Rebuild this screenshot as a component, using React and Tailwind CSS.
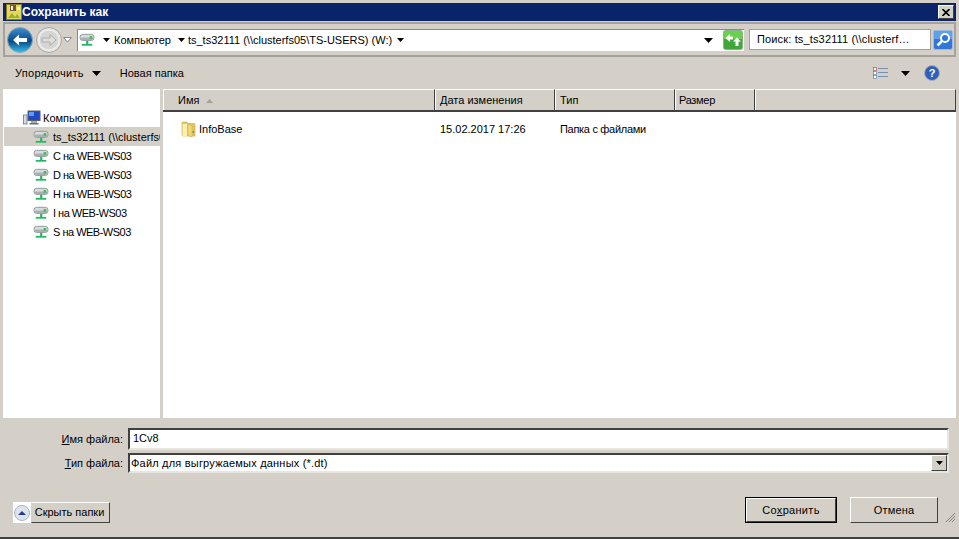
const font = { fontFamily: '"Liberation Sans", sans-serif' };

function NetDrive() {
  return (
    <svg width="16" height="14" viewBox="0 0 18 16" className="shrink-0">
      <rect x="1" y="1.5" width="16" height="7" rx="3" fill="#d8dcdc" stroke="#8a9296" />
      <rect x="2" y="5" width="14" height="3" rx="1.5" fill="#a9b1b4" />
      <rect x="12" y="3.5" width="3" height="3" fill="#3fbf4f" />
      <rect x="8" y="9" width="2.5" height="4" fill="#2fb35a" />
      <rect x="3" y="12.5" width="12" height="2" fill="#22b866" />
    </svg>
  );
}

function Computer() {
  return (
    <svg width="18" height="16" viewBox="0 0 18 16" className="shrink-0">
      <rect x="0.5" y="5" width="3.5" height="9" fill="#d5dde0" stroke="#5d7a86" strokeWidth="0.8" />
      <rect x="5" y="1" width="12" height="9.5" fill="#1f47c8" stroke="#59606a" />
      <rect x="6" y="2" width="5" height="4" fill="#5f9cf0" />
      <rect x="8" y="11" width="6" height="2" fill="#a2a8ac" />
      <rect x="6.5" y="13" width="9" height="1.5" fill="#6a7076" />
    </svg>
  );
}

function Folder() {
  return (
    <svg width="16" height="17" viewBox="0 0 16 17" className="shrink-0">
      <path d="M1 2 Q1 1 2 1 H6 L7 2.5 H13 Q14 2.5 14 3.5 V15 H2 Q1 15 1 14 Z" fill="#e8c65f" stroke="#c9a64a" strokeWidth="0.6" />
      <path d="M1.5 3 H6 V15.5 H2 Q1.5 15.5 1.5 15 Z" fill="#fbeeb0" />
      <path d="M7 3 L11 4.5 V16 L7 14.5 Z" fill="#f3d877" stroke="#c9a64a" strokeWidth="0.5" />
      <rect x="11.5" y="10" width="1.5" height="2" fill="#3f9ec9" />
    </svg>
  );
}

function Caret({ className = "" }) {
  return (
    <svg width="9" height="5" viewBox="0 0 9 5" className={"shrink-0 " + className}>
      <path d="M0 0 H9 L4.5 5 Z" fill="#000" />
    </svg>
  );
}

function SmallCaret() {
  return (
    <svg width="7" height="4" viewBox="0 0 7 4" className="shrink-0">
      <path d="M0 0 H7 L3.5 4 Z" fill="#000" />
    </svg>
  );
}

function TitleIcon() {
  return (
    <svg width="16" height="16" viewBox="0 0 16 16" className="shrink-0">
      <rect x="0.5" y="0.5" width="15" height="15" fill="#e9d55a" stroke="#8a7a20" />
      <rect x="4" y="1" width="6" height="6" fill="#6b5a3a" />
      <rect x="5" y="2" width="2" height="4" fill="#f4f0e0" />
      <path d="M2 14 L6 9 L9 13 L11 10 L14 14 Z" fill="#8fb72e" />
      <rect x="11" y="3" width="3" height="3" fill="#fff6b0" />
    </svg>
  );
}

function BackButton() {
  return (
    <svg width="26" height="26" viewBox="0 0 26 26" className="shrink-0">
      <defs>
        <linearGradient id="backFill" x1="0" y1="0" x2="0" y2="1">
          <stop offset="0" stopColor="#3f8fd0" />
          <stop offset="0.5" stopColor="#0f4f8f" />
          <stop offset="0.55" stopColor="#0a4a86" />
          <stop offset="1" stopColor="#36c0ee" />
        </linearGradient>
      </defs>
      <circle cx="13" cy="13" r="12.5" fill="url(#backFill)" stroke="#8fa6b8" />
      <path d="M6 13 L12 7.5 V11 H20 V15 H12 V18.5 Z" fill="#fff" />
    </svg>
  );
}

function ForwardButton() {
  return (
    <svg width="26" height="26" viewBox="0 0 26 26" className="shrink-0">
      <circle cx="13" cy="13" r="12.5" fill="#e4e4e2" stroke="#a8a8a6" />
      <circle cx="13" cy="13" r="10" fill="#d6d6d4" stroke="#f2f2f0" />
      <path d="M20 13 L14 7.5 V11 H6 V15 H14 V18.5 Z" fill="#dededc" stroke="#a2a2a0" strokeWidth="0.8" />
    </svg>
  );
}

function Refresh() {
  return (
    <svg width="20" height="20" viewBox="0 0 20 20" className="shrink-0">
      <rect x="0.5" y="0.5" width="19" height="19" rx="2" fill="#3fa63a" stroke="#86b884" />
      <rect x="1" y="1" width="18" height="8" fill="#6bd04f" />
      <path d="M2.5 8 L7 4 V6.5 H10 V9.5 H7 V12 Z" fill="#fff" />
      <path d="M14 7.5 L18 11.5 H15.5 V16 H12.5 V11.5 H10 Z" fill="#fff" />
    </svg>
  );
}

function SearchIcon() {
  return (
    <svg width="20" height="20" viewBox="0 0 20 20" className="shrink-0">
      <rect x="0.5" y="0.5" width="19" height="19" rx="2" fill="#2f78d8" stroke="#9dbbe0" />
      <rect x="1" y="1" width="18" height="8" fill="#5fa0ea" />
      <circle cx="12" cy="8" r="4" fill="#2f78d8" stroke="#fff" strokeWidth="2" />
      <path d="M9 11 L4.5 15.5" stroke="#fff" strokeWidth="2.5" />
    </svg>
  );
}

function ViewsIcon() {
  return (
    <svg width="16" height="12" viewBox="0 0 16 12" className="shrink-0">
      <rect x="0.5" y="0.5" width="3" height="3" fill="#fff" stroke="#c0504d" strokeWidth="0.7" />
      <rect x="0.5" y="4.5" width="3" height="3" fill="#fff" stroke="#6080b0" strokeWidth="0.7" />
      <rect x="0.5" y="8.5" width="3" height="3" fill="#fff" stroke="#6080b0" strokeWidth="0.7" />
      <path d="M5 1.5 H15 M5 5.5 H15 M5 9.5 H15" stroke="#7890b0" />
    </svg>
  );
}

function HelpIcon() {
  return (
    <svg width="16" height="16" viewBox="0 0 16 16" className="shrink-0">
      <circle cx="8" cy="8" r="7.5" fill="#2f5fb8" stroke="#a9aeb8" />
      <text x="8" y="12" textAnchor="middle" fontSize="11" fontWeight="700" fill="#fff" fontFamily="Liberation Sans">?</text>
    </svg>
  );
}

function HeaderCell({ w, className = "", children }) {
  return (
    <div className={"flex h-full shrink-0 items-center gap-[7px] border-t border-l border-r border-t-white border-l-white border-r-[#404040] pt-px " + w + " " + className}>
      {children}
    </div>
  );
}

const drives = ["C на WEB-WS03", "D на WEB-WS03", "H на WEB-WS03", "I на WEB-WS03", "S на WEB-WS03"];

export default function App() {
  return (
    <div style={font} className="flex h-[539px] w-[959px] flex-col overflow-hidden border-b-2 border-b-[#404040] bg-[#d4d0c8] px-[3px] pt-[3px] text-[11px] leading-none text-black">
      {/* title bar */}
      <div className="flex h-[18px] shrink-0 items-center justify-between bg-[#0a246a] pl-[3px] pr-[2px]">
        <div className="flex items-center text-[12px] font-bold text-white">
          <TitleIcon />
          <span>Сохранить как</span>
        </div>
        <div className="flex h-[14px] w-[16px] items-center justify-center border border-t-white border-l-white border-r-[#404040] border-b-[#404040] bg-[#d4d0c8]">
          <svg width="8" height="7" viewBox="0 0 8 7"><path d="M0.5 0 L7.5 7 M7.5 0 L0.5 7" stroke="#000" strokeWidth="1.6" /></svg>
        </div>
      </div>

      {/* address bar */}
      <div className="mt-[1px] flex h-[35px] shrink-0 items-center border-2 border-[#a5a29c] pl-[2px]">
        <BackButton />
        <div className="w-[3px]" />
        <ForwardButton />
        <svg width="9" height="6" viewBox="0 0 9 6" className="ml-[1px] shrink-0"><path d="M0.5 0.5 H8.5 L4.5 5 Z" fill="#fff" stroke="#8c8c8c" /></svg>
        <div className="ml-[5px] flex h-[22px] w-[667px] shrink-0 items-center border-t border-l border-t-[#8c8a84] border-l-[#8c8a84] bg-white pl-px">
          <NetDrive />
          <div className="ml-[8px]"><SmallCaret /></div>
          <span className="ml-[4px]">Компьютер</span>
          <div className="ml-[7px]"><SmallCaret /></div>
          <span className="ml-[3px]">ts_ts32111 (\\clusterfs05\TS-USERS) (W:)</span>
          <div className="ml-[5px]"><SmallCaret /></div>
          <div className="ml-auto mr-[10px]"><Caret /></div>
          <div className="mr-[1px]"><Refresh /></div>
        </div>
        <div className="ml-[5px] flex h-[21px] w-[182px] shrink-0 items-center border border-[#a5a29c] bg-white pl-[7px] tracking-[0.15px]">
          Поиск: ts_ts32111 (\\clusterf…
        </div>
        <div className="ml-[2px]"><SearchIcon /></div>
      </div>

      {/* toolbar */}
      <div className="flex h-[32px] shrink-0 items-center pl-[12px] pr-[16px]">
        <span className="tracking-[0.3px]">Упорядочить</span>
        <Caret className="ml-[8px]" />
        <span className="ml-[19px]">Новая папка</span>
        <div className="ml-auto flex items-center">
          <ViewsIcon />
          <Caret className="ml-[12px]" />
          <div className="ml-[14px]"><HelpIcon /></div>
        </div>
      </div>

      {/* panes */}
      <div className="flex h-[329px] shrink-0 gap-[3px]">
        <div className="flex w-[157px] shrink-0 flex-col overflow-hidden bg-white pl-px pt-[20px]">
          <div className="flex h-[18px] items-center pl-[19px]">
            <Computer />
            <span className="ml-[2px]">Компьютер</span>
          </div>
          <div className="flex h-[19px] items-center overflow-hidden whitespace-nowrap bg-[#d4d0c8] pl-[29px] pt-px">
            <NetDrive />
            <span className="ml-[4px] min-w-0 overflow-hidden">ts_ts32111 (\\clusterfs05\TS-USERS)</span>
          </div>
          {drives.map((d) => (
            <div key={d} className="flex h-[19px] items-center pl-[29px] pt-px">
              <NetDrive />
              <span className="ml-[4px] tracking-[-0.5px]">{d}</span>
            </div>
          ))}
        </div>
        <div className="flex min-w-0 flex-1 flex-col bg-white">
          <div className="flex h-[23px] shrink-0 border-b-2 border-b-[#404040] bg-[#d4d0c8]">
            <HeaderCell w="w-[272px]" className="pl-[14px]">
              <span>Имя</span>
              <svg width="7" height="4" viewBox="0 0 7 4"><path d="M0 4 H7 L3.5 0 Z" fill="#a5a29c" /></svg>
            </HeaderCell>
            <HeaderCell w="w-[120px]" className="pl-[4px]">Дата изменения</HeaderCell>
            <HeaderCell w="w-[120px]" className="pl-[4px]">Тип</HeaderCell>
            <HeaderCell w="w-[80px]" className="pl-[3px] tracking-[-0.3px]">Размер</HeaderCell>
            <div className="flex-1 border-t border-l border-r border-t-white border-l-white border-r-[#404040]" />
          </div>
          <div className="mt-[8px] flex h-[18px] items-center">
            <div className="flex w-[272px] items-center pl-[18px]">
              <Folder />
              <span className="ml-[2px]">InfoBase</span>
            </div>
            <div className="w-[120px] pl-[5px]">15.02.2017 17:26</div>
            <div className="pl-[5px] tracking-[-0.3px]">Папка с файлами</div>
          </div>
        </div>
      </div>

      {/* file name and type */}
      <div className="mt-[10px] flex h-[22px] shrink-0 items-center pr-[7px]">
        <label className="w-[120px] shrink-0 text-right"><span className="underline">И</span>мя файла:</label>
        <div className="ml-[5px] flex h-full flex-1 items-center border-2 border-t-[#404040] border-l-[#404040] border-r-[#e8e6e0] border-b-[#e8e6e0] bg-white pb-px pl-[3px]">1Cv8</div>
      </div>
      <div className="mt-[3px] flex h-[20px] shrink-0 items-center pr-[7px]">
        <label className="w-[120px] shrink-0 pt-px text-right"><span className="underline">Т</span>ип файла:</label>
        <div className="ml-[5px] flex h-full flex-1 items-center justify-between border-2 border-t-[#404040] border-l-[#404040] border-r-[#e8e6e0] border-b-[#e8e6e0] bg-white pl-px">
          <span className="pt-px tracking-[0.2px]">Файл для выгружаемых данных (*.dt)</span>
          <div className="flex h-[16px] w-[16px] items-center justify-center border border-t-white border-l-white border-r-[#404040] border-b-[#404040] bg-[#d4d0c8]">
            <SmallCaret />
          </div>
        </div>
      </div>

      {/* buttons */}
      <div className="mt-[24px] flex h-[26px] shrink-0 items-start justify-between pl-[10px] pr-[18px]">
        <div className="mt-[5px] flex h-[21px]">
          <div className="flex w-[18px] items-center justify-center bg-white">
            <svg width="16" height="16" viewBox="0 0 16 16">
              <circle cx="8" cy="8" r="7.5" fill="#dfe4ec" stroke="#aab4c8" />
              <path d="M4 10 L8 6 L12 10 Z" fill="#1f3f90" />
            </svg>
          </div>
          <div className="flex w-[79px] items-center justify-center border border-t-white border-r-[#404040] border-b-[#404040] border-l-[#d4d0c8] pr-[2px]">Скрыть папки</div>
        </div>
        <div className="flex gap-[13px]">
          <div className="flex h-[26px] w-[92px] items-center justify-center border border-black">
            <div className="flex h-full w-full items-center justify-center border border-t-white border-l-white border-r-[#404040] border-b-[#404040] tracking-[0.3px]">
              <span>Со<span className="underline">х</span>ранить</span>
            </div>
          </div>
          <div className="flex h-[26px] w-[88px] items-center justify-center border border-t-white border-l-white border-r-[#404040] border-b-[#404040] tracking-[0.2px]">Отмена</div>
        </div>
      </div>

      <div className="flex flex-1 justify-end">
        <svg width="12" height="12" viewBox="0 0 12 12" className="-mt-[12px]">
          <path d="M11 2 L2 11 M11 5 L5 11 M11 8 L8 11" stroke="#808080" />
        </svg>
      </div>
    </div>
  );
}
